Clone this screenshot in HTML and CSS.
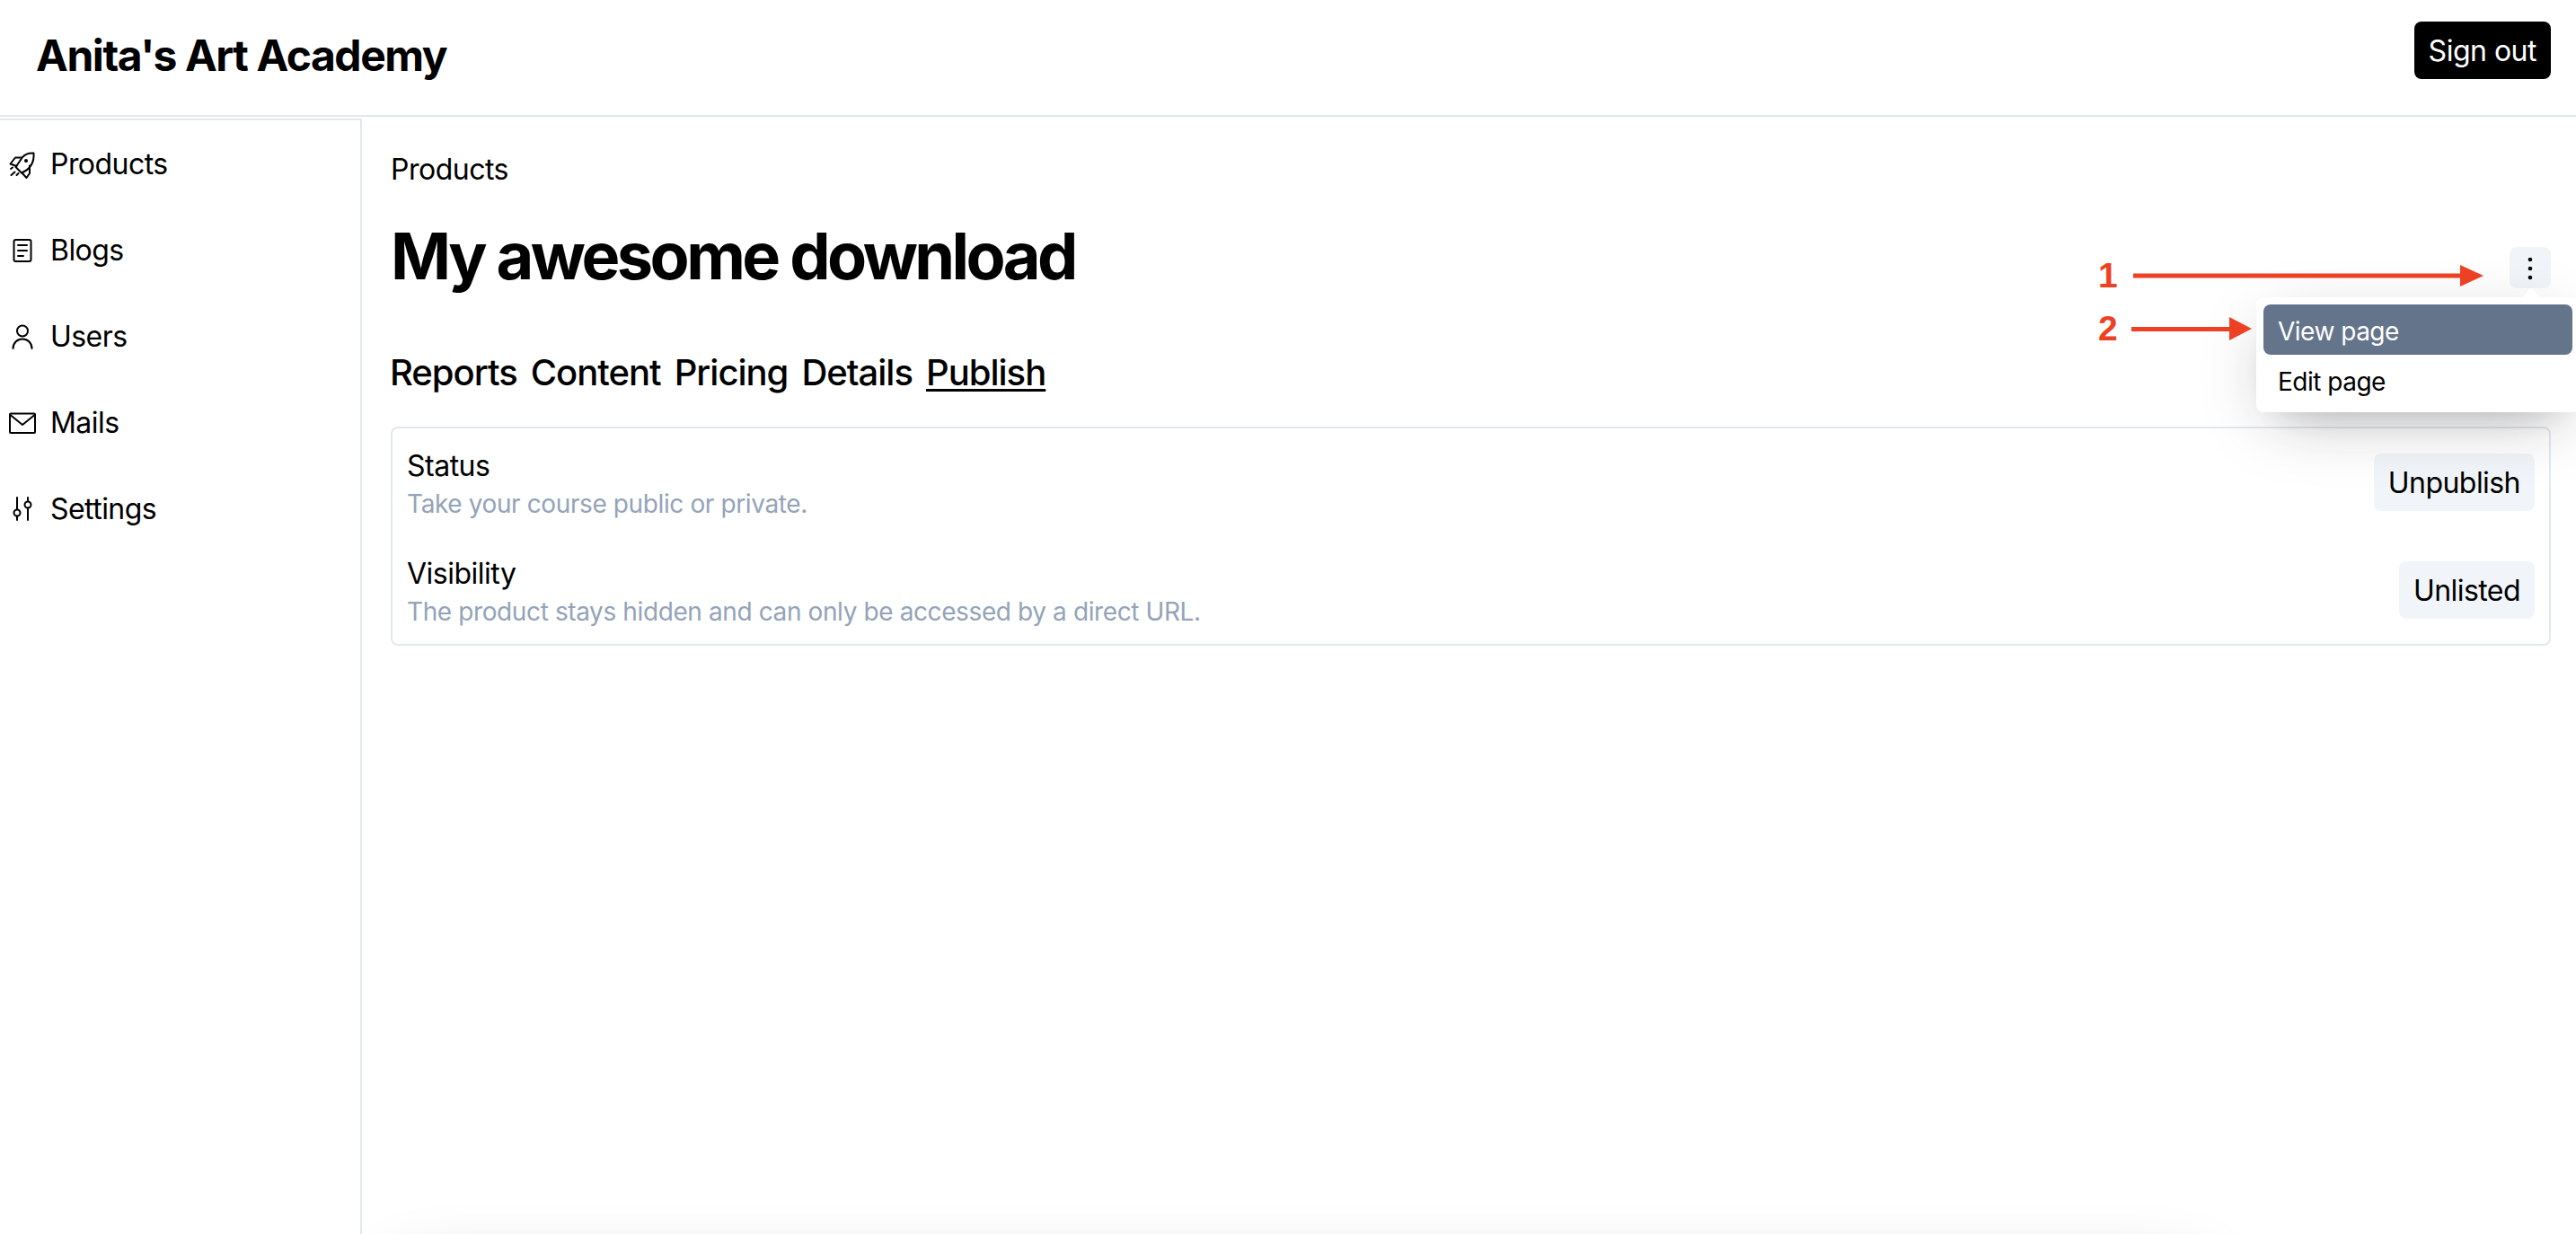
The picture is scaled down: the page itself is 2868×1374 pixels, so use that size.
FILE: index.html
```html
<!DOCTYPE html>
<html lang="en">
<head>
<meta charset="utf-8">
<title>My awesome download</title>
<link rel="stylesheet" href="styles.css">
</head>
<body>
<div class="page">
<header class="topbar">
  <div class="brand">Anita's Art Academy</div>
  <button class="signout">Sign out</button>
</header>
<div class="shell">
  <nav class="sidebar">
    <a class="nav-item">
      <svg class="nav-icon" viewBox="0 0 32 32"><path d="M28.500 3.500C23 3 19 4.500 16 8L8.500 19L15 25.500C22 22.500 29.500 16 28.500 3.500Z"/><path d="M14.500 8.500H8L2.500 15.500L9.500 18"/><path d="M24 17.500V26L20.500 31L15.500 25.500"/><circle class="eye" cx="20" cy="12" r="2"/><path d="M3 21L5 19.500M3.500 28L7.500 24.500M9.500 28L11.500 26"/></svg>
      <span>Products</span>
    </a>
    <a class="nav-item">
      <svg class="nav-icon" viewBox="0 0 32 32"><rect x="6.500" y="4" width="19" height="24" rx="2"/><path d="M11 10H21M11 16H21M11 22H17"/></svg>
      <span>Blogs</span>
    </a>
    <a class="nav-item">
      <svg class="nav-icon" viewBox="0 0 32 32"><circle cx="16" cy="9.500" r="6"/><path d="M5.500 29C5.500 23 10 18.500 16 18.500C22 18.500 26.500 23 26.500 29"/></svg>
      <span>Users</span>
    </a>
    <a class="nav-item">
      <svg class="nav-icon" viewBox="0 0 32 32"><rect x="2" y="5.500" width="28" height="21.500" rx="1"/><path d="M2.500 7L16 18L29.500 7"/></svg>
      <span>Mails</span>
    </a>
    <a class="nav-item">
      <svg class="nav-icon" viewBox="0 0 32 32"><path d="M10 3V28M22 3V28"/><circle class="knob" cx="10" cy="20" r="3.500"/><circle class="knob" cx="22" cy="11" r="3.500"/></svg>
      <span>Settings</span>
    </a>
  </nav>
  <main class="content">
    <div class="crumb">Products</div>
    <div class="title-row">
      <h1 class="page-title">My awesome download</h1>
      <div class="menu-anchor">
        <button class="kebab" aria-label="More">
          <svg class="kebab-dots" viewBox="0 0 8 32"><circle cx="4" cy="7" r="2.300"/><circle cx="4" cy="17" r="2.300"/><circle cx="4" cy="27" r="2.300"/></svg>
        </button>
        <div class="menu">
          <div class="menu-arrow"></div>
          <div class="menu-item active">View page</div>
          <div class="menu-item">Edit page</div>
        </div>
      </div>
    </div>
    <div class="tabs">
      <a class="tab">Reports</a>
      <a class="tab">Content</a>
      <a class="tab">Pricing</a>
      <a class="tab">Details</a>
      <a class="tab current">Publish</a>
    </div>
    <section class="card">
      <div class="row">
        <div>
          <div class="row-title">Status</div>
          <div class="row-desc">Take your course public or private.</div>
        </div>
        <button class="soft-btn">Unpublish</button>
      </div>
      <div class="row">
        <div>
          <div class="row-title">Visibility</div>
          <div class="row-desc">The product stays hidden and can only be accessed by a direct URL.</div>
        </div>
        <button class="soft-btn">Unlisted</button>
      </div>
    </section>
  </main>
</div>
<div class="offscreen-pop"></div>
<div class="annotation one">
  <span class="anno-num">1</span>
  <svg class="anno-arrow" width="392" height="24" viewBox="0 0 392 24"><path d="M0 9.500H365V14.500H0Z"/><path d="M364 0L390 12L364 24Z"/></svg>
</div>
<div class="annotation two">
  <span class="anno-num">2</span>
  <svg class="anno-arrow" width="136" height="26" viewBox="0 0 136 26"><path d="M0 11H110V16H0Z"/><path d="M109 0L134 13L109 26Z"/></svg>
</div>
</div>
</body>
</html>
```

FILE: styles.css
```css
* { box-sizing: border-box; }
html, body { height: 100%; }
body {
  margin: 0;
  background: #fff;
  color: #000;
  font-family: Inter, "Liberation Sans", sans-serif;
  font-size: 32px;
  line-height: 48px;
  letter-spacing: -0.5px;
}
.page { position: relative; height: 1374px; overflow: hidden; }
button { font: inherit; letter-spacing: inherit; color: inherit; border: 0; cursor: pointer; }

.topbar {
  height: 130px;
  padding: 24px 28px 0 40px;
  display: flex;
  justify-content: space-between;
  align-items: flex-start;
  border-bottom: 2px solid #e2e8f0;
}
.brand { font-size: 48px; line-height: 72px; font-weight: 700; letter-spacing: -1.45px; margin-top: 2px; }
.signout {
  height: 64px;
  padding: 2px 16px 0;
  background: #000;
  color: #fff;
  border-radius: 8px;
}

.shell { display: flex; margin-top: 2px; height: 1242px; }
.sidebar {
  width: 403px;
  flex: none;
  padding: 25px 0 0 9px;
  border-top: 2px solid #e2e8f0;
  border-right: 2px solid #e2e8f0;
  display: flex;
  flex-direction: column;
  gap: 48px;
}
.nav-item { display: flex; align-items: center; gap: 15px; height: 48px; letter-spacing: -0.55px; }
.nav-icon {
  width: 32px;
  height: 32px;
  fill: none;
  stroke: #000;
  stroke-width: 2;
  stroke-linecap: round;
  stroke-linejoin: round;
}
.nav-icon .eye { fill: #000; stroke: none; }
.nav-icon .knob { fill: #fff; }

.content { flex: 1; min-width: 0; padding: 33px 28px 0 32px; }
.crumb { height: 48px; }
.title-row {
  margin-top: 30px;
  display: flex;
  justify-content: space-between;
  align-items: flex-end;
}
.page-title { margin: 0; height: 80px; padding-top: 2px; font-size: 72px; line-height: 80px; font-weight: 700; letter-spacing: -3.55px; }
.menu-anchor { position: relative; margin-bottom: 2px; }
.kebab {
  display: flex;
  align-items: center;
  justify-content: center;
  width: 46px;
  height: 46px;
  padding: 0;
  background: #f1f5f9;
  border-radius: 8px;
}
.kebab-dots { width: 8px; height: 32px; fill: #000; }
.menu {
  position: absolute;
  top: 56px;
  left: -282px;
  width: 360px;
  padding: 8px;
  background: #fff;
  border-radius: 8px;
  box-shadow: 0 20px 76px -20px rgba(22, 23, 24, 0.35), 0 20px 40px -30px rgba(22, 23, 24, 0.2);
  font-size: 28px;
  line-height: 40px;
  letter-spacing: -0.5px;
}
.menu-arrow {
  position: absolute;
  top: -10px;
  left: 296px;
  width: 0;
  height: 0;
  border-left: 10px solid transparent;
  border-right: 10px solid transparent;
  border-bottom: 10px solid #fff;
}
.menu-item { height: 56px; padding: 10px 16px 0; border-radius: 8px; }
.menu-item.active { background: #64748b; color: #fff; }

.tabs {
  margin: 62px 0 0 -1px;
  display: flex;
  gap: 15px;
  font-size: 40px;
  line-height: 60px;
  font-weight: 500;
  letter-spacing: -1px;
}
.tab.current { text-decoration: underline; text-decoration-thickness: 3px; text-underline-offset: 4px; }

.card {
  margin-top: 30px;
  padding: 16px;
  border: 2px solid #e2e8f0;
  border-radius: 8px;
  display: flex;
  flex-direction: column;
  gap: 32px;
}
.row { display: flex; justify-content: space-between; align-items: center; }
.row-title { height: 48px; padding-top: 2px; }
.row-desc { font-size: 28px; line-height: 40px; letter-spacing: -0.39px; color: #94a3b8; }
.soft-btn { height: 64px; padding: 2px 16px 0; background: #f1f5f9; border-radius: 8px; letter-spacing: -0.55px; }

.offscreen-pop {
  position: absolute;
  left: 430px;
  top: 1385px;
  width: 2030px;
  height: 100px;
  box-shadow: 0 20px 76px -20px rgba(22, 23, 24, 0.35), 0 20px 40px -30px rgba(22, 23, 24, 0.2);
}

.annotation { position: absolute; display: flex; align-items: center; }
.annotation.one { left: 2336px; top: 288px; height: 38px; }
.annotation.two { left: 2336px; top: 347px; height: 38px; }
.anno-num {
  font-family: "Liberation Sans", Arial, sans-serif;
  font-weight: 700;
  font-size: 39px;
  line-height: 38px;
  letter-spacing: 0;
  color: #ee4123;
  width: 37px;
}
.annotation.one .anno-arrow { margin-left: 2px; }
.anno-arrow { fill: #ee4123; }
```
